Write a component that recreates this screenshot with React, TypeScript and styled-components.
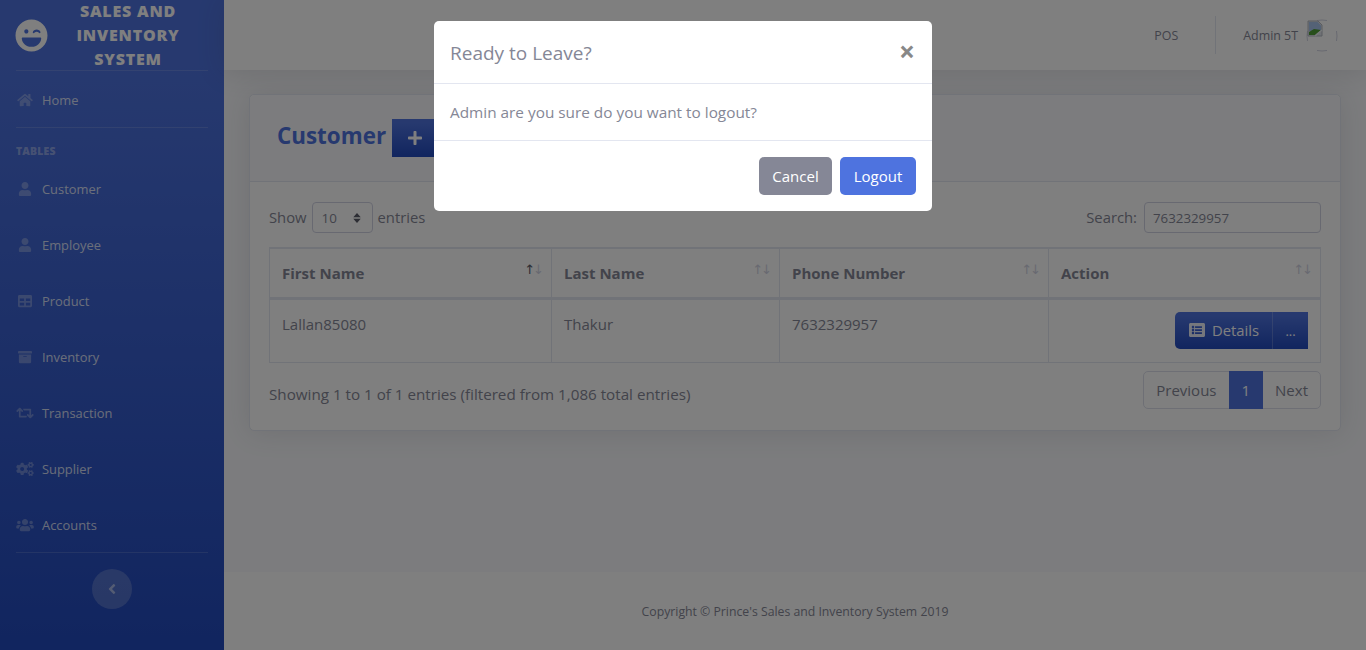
import React from "react";
import styled, { createGlobalStyle } from "styled-components";
import {
  FaAngleLeft,
  FaArchive,
  FaCogs,
  FaHome,
  FaLaughWink,
  FaListAlt,
  FaPlus,
  FaRetweet,
  FaTable,
  FaUser,
  FaUsers,
} from "react-icons/fa";

const FONT = `"Open Sans", "Noto Sans", sans-serif`;

const GlobalStyle = createGlobalStyle`
  html, body {
    margin: 0;
    height: 650px;
    overflow: hidden;
    background: #f8f9fc;
    font-family: ${FONT};
    color: #858796;
  }
  * { box-sizing: border-box; }
`;

const Wrapper = styled.div`
  display: flex;
  width: 1366px;
  height: 650px;
`;

const Sidebar = styled.aside`
  width: 224px;
  flex: none;
  display: flex;
  flex-direction: column;
  background: linear-gradient(180deg, #4e73df 10%, #224abe 100%);
`;

const Brand = styled.div`
  height: 70px;
  flex: none;
  display: flex;
  align-items: center;
  padding-left: 15px;
  color: #fff;
  font-size: 33px;
  svg { flex: none; }
`;

const BrandText = styled.div`
  width: 130px;
  margin-left: 15px;
  text-align: center;
  font-size: 16px;
  font-weight: 800;
  line-height: 24px;
  letter-spacing: 0.8px;
  text-transform: uppercase;
`;

const Divider = styled.hr<{ $top?: number }>`
  margin: ${(p) => p.$top ?? 0}px 16px 0;
  border: 0;
  border-top: 1px solid rgba(255, 255, 255, 0.15);
`;

const SideHeading = styled.div`
  margin-top: 18px;
  padding: 0 16px;
  height: 15px;
  font-size: 10.4px;
  line-height: 11px;
  font-weight: 800;
  letter-spacing: 0.2px;
  color: rgba(255, 255, 255, 0.4);
`;

const NavItem = styled.a<{ $first?: boolean }>`
  height: 56px;
  flex: none;
  display: flex;
  align-items: center;
  margin-top: ${(p) => (p.$first ? 1 : 0)}px;
  padding: 0 16px 1px;
  font-size: 12.9px;
  color: rgba(255, 255, 255, 0.8);
  svg {
    width: 18px;
    height: 14px;
    margin-right: 8px;
    color: rgba(255, 255, 255, 0.3);
  }
`;

const NavList = styled.nav`
  display: flex;
  flex-direction: column;
`;

const ToggleRow = styled.div`
  display: flex;
  justify-content: center;
  margin-top: 16px;
`;

const Toggle = styled.button`
  width: 40px;
  height: 40px;
  padding: 0;
  display: flex;
  align-items: center;
  justify-content: center;
  border: 0;
  border-radius: 50%;
  background: rgba(255, 255, 255, 0.2);
  color: rgba(255, 255, 255, 0.5);
  font-size: 16px;
`;

const Main = styled.div`
  flex: 1;
  min-width: 0;
  display: flex;
  flex-direction: column;
`;

const Topbar = styled.header`
  height: 70px;
  flex: none;
  display: flex;
  align-items: center;
  justify-content: flex-end;
  background: #fff;
  box-shadow: 0 2px 28px 0 rgba(58, 59, 69, 0.15);
  font-size: 12.4px;
  color: #858796;
`;

const TopDivider = styled.div`
  width: 1px;
  height: 38px;
  margin: 0 27px 0 37px;
  background: #e3e6f0;
`;

const Avatar = styled.svg`
  width: 32px;
  height: 33px;
  margin: 0 28px 0 8px;
  display: block;
`;

const Content = styled.main`
  padding: 24px 25px 0 25px;
`;

const Card = styled.section`
  height: 337px;
  background: #fff;
  border: 1px solid #e3e6f0;
  border-radius: 5px;
  box-shadow: 0 2px 28px 0 rgba(58, 59, 69, 0.12);
`;

const CardHeader = styled.div`
  height: 87px;
  display: flex;
  align-items: center;
  padding: 0 27px;
  background: #f8f9fc;
  border-bottom: 1px solid #e3e6f0;
  border-radius: 5px 5px 0 0;
`;

const Title = styled.h4`
  margin: 0 6px 6px 0;
  font-size: 22.4px;
  font-weight: 700;
  color: #4e73df;
`;

const AddButton = styled.button`
  width: 90px;
  height: 38px;
  padding: 0;
  border: 0;
  color: #fff;
  background: linear-gradient(180deg, #4e73df 10%, #224abe 100%);
  font-size: 16px;
  text-align: left;
  svg { margin-left: 15px; display: block; }
`;

const CardBody = styled.div`
  padding: 20px 19px;
  font-size: 15.2px;
`;

const Controls = styled.div`
  height: 31px;
  display: flex;
  align-items: center;
  justify-content: space-between;
`;

const ControlLabel = styled.div`
  display: flex;
  align-items: center;
  gap: 5px;
  margin-top: -2px;
  font-size: 14.8px;
`;

const SelectBox = styled.div`
  width: 61px;
  height: 31px;
  margin-top: 2px;
  padding-left: 9px;
  display: flex;
  align-items: center;
  border: 1px solid #d1d3e2;
  border-radius: 4px;
  background: #fff;
  font-size: 13.4px;
  svg { margin-left: 16px; }
`;

const SearchInput = styled.div`
  width: 177px;
  height: 31px;
  margin: 2px 0 0 2px;
  padding-left: 8px;
  display: flex;
  align-items: center;
  border: 1px solid #d1d3e2;
  border-radius: 4px;
  background: #fff;
  font-size: 13.3px;
`;

const Table = styled.table`
  width: 1051px;
  margin-top: 14px;
  border-collapse: collapse;
  table-layout: fixed;
  border: 1px solid #e3e6f0;
`;

const HeadCell = styled.th`
  height: 50px;
  padding: 0 12px;
  text-align: left;
  font-size: 15px;
  font-weight: 700;
  border: 1px solid #e3e6f0;
  border-top-width: 2px;
  border-bottom-width: 3px;
`;

const HeadInner = styled.div`
  display: flex;
  align-items: center;
  justify-content: space-between;
`;

const SortArrows = styled.span`
  margin: -6px -3px 0 0;
  font-family: "DejaVu Sans", sans-serif;
  font-size: 13px;
  font-weight: 400;
  letter-spacing: -2px;
  color: #d1d3e2;
`;

const SortUp = styled.span<{ $active?: boolean }>`
  color: ${(p) => (p.$active ? "#5a5c69" : "inherit")};
`;

const Cell = styled.td`
  height: 64px;
  padding: 14px 12px 0;
  vertical-align: top;
  font-size: 15px;
  border: 1px solid #e3e6f0;
`;

const ActionCell = styled(Cell)`
  padding-top: 12px;
`;

const SplitButton = styled.div`
  display: flex;
  justify-content: flex-end;
  color: #fff;
  font-size: 14.8px;
`;

const DetailsPart = styled.div`
  width: 97px;
  height: 37px;
  display: flex;
  align-items: center;
  gap: 7px;
  padding-left: 14px;
  border-radius: 5px 0 0 5px;
  background: linear-gradient(180deg, #4e73df 10%, #224abe 100%);
  svg { font-size: 16px; color: rgba(255, 255, 255, 0.9); }
`;

const MorePart = styled.div`
  width: 36px;
  height: 37px;
  padding-top: 10px;
  text-align: center;
  border-left: 1px solid rgba(255, 255, 255, 0.2);
  background: linear-gradient(180deg, #4e73df 10%, #224abe 100%);
  font-size: 13px;
`;

const Bottom = styled.div`
  display: flex;
  align-items: center;
  justify-content: space-between;
  margin-top: 8px;
`;

const Summary = styled.span`
  margin-top: 8px;
`;

const Pagination = styled.div`
  display: flex;
  height: 38px;
  border: 1px solid #dddfeb;
  border-radius: 5px;
  background: #fff;
  font-size: 15px;
`;

const PageLink = styled.span<{ $active?: boolean }>`
  display: flex;
  align-items: center;
  padding: 0 ${(p) => (p.$active ? 13 : 12)}px;
  margin: ${(p) => (p.$active ? "-1px 0" : "0")};
  background: ${(p) => (p.$active ? "#4e73df" : "transparent")};
  color: ${(p) => (p.$active ? "#fff" : "#858796")};
`;

const Footer = styled.footer`
  margin-top: auto;
  height: 78px;
  display: flex;
  align-items: center;
  justify-content: center;
  background: #fff;
  font-size: 12.25px;
  color: #858796;
`;

const Backdrop = styled.div`
  position: fixed;
  inset: 0;
  display: flex;
  justify-content: center;
  align-items: flex-start;
  padding-top: 21px;
  background: rgba(0, 0, 0, 0.5);
`;

const Modal = styled.div`
  width: 498px;
  height: 190px;
  background: #fff;
  border-radius: 5px;
`;

const ModalHeader = styled.div`
  height: 63px;
  display: flex;
  align-items: center;
  justify-content: space-between;
  padding: 2px 16px 0;
  border-bottom: 1px solid #e3e6f0;
`;

const ModalTitle = styled.h5`
  margin: 0;
  font-size: 19px;
  font-weight: 400;
  color: #858796;
`;

const CloseMark = styled.span`
  margin: -5px 1px 0 0;
  font-size: 28px;
  line-height: 1;
  font-weight: 700;
  color: #888;
`;

const ModalBody = styled.div`
  height: 57px;
  display: flex;
  align-items: center;
  padding: 0 16px;
  border-bottom: 1px solid #e3e6f0;
  font-size: 15.35px;
  color: #858796;
`;

const ModalFooter = styled.div`
  display: flex;
  justify-content: flex-end;
  gap: 8px;
  padding: 16px;
`;

const ModalButton = styled.button<{ $primary?: boolean }>`
  height: 38px;
  width: ${(p) => (p.$primary ? 76 : 73)}px;
  padding: 0;
  border: 0;
  border-radius: 5px;
  background: ${(p) => (p.$primary ? "#4e73df" : "#858796")};
  color: #fff;
  font-family: ${FONT};
  font-size: 15px;
`;

const NAV = [
  { label: "Customer", icon: <FaUser /> },
  { label: "Employee", icon: <FaUser /> },
  { label: "Product", icon: <FaTable /> },
  { label: "Inventory", icon: <FaArchive /> },
  { label: "Transaction", icon: <FaRetweet /> },
  { label: "Supplier", icon: <FaCogs /> },
  { label: "Accounts", icon: <FaUsers /> },
];

const COLUMNS = [
  { label: "First Name", width: 282, active: true },
  { label: "Last Name", width: 228 },
  { label: "Phone Number", width: 269 },
  { label: "Action", width: 272 },
];

// broken image placeholder plus the bits of the round border that still show
function BrokenAvatar() {
  return (
    <Avatar viewBox="0 0 32 33">
      <g fill="none" stroke="#d1d3e2">
        <path d="M11 1.500q5-1 10 0" />
        <path d="M11 31.500q5 1 10 0" />
        <path d="M1.500 12q-1 5 0 10" />
        <path d="M30.500 12q1 5 0 10" />
      </g>
      <path d="M2 2h10l4 4v11H2z" fill="#dfe3ea" stroke="#b4b9c2" />
      <path d="M3 3h8.500l3.500 3.500v5L3 12z" fill="#a9c4ec" />
      <path d="M3 16v-3l5-3 7 1-6 5z" fill="#4f9e36" />
      <path d="M9 17l7-6" stroke="#eef0f4" strokeWidth="1.500" />
    </Avatar>
  );
}

export default function App() {
  return (
    <>
      <GlobalStyle />
      <Wrapper>
        <Sidebar>
          <Brand>
            <FaLaughWink />
            <BrandText>Sales and Inventory System</BrandText>
          </Brand>
          <Divider />
          <NavList>
            <NavItem $first>
              <FaHome />
              Home
            </NavItem>
          </NavList>
          <Divider $top={-1} />
          <SideHeading>TABLES</SideHeading>
          <NavList>
            {NAV.map((item) => (
              <NavItem key={item.label}>
                {item.icon}
                {item.label}
              </NavItem>
            ))}
          </NavList>
          <Divider $top={-1} />
          <ToggleRow>
            <Toggle>
              <FaAngleLeft />
            </Toggle>
          </ToggleRow>
        </Sidebar>
        <Main>
          <Topbar>
            <span>POS</span>
            <TopDivider />
            <span>Admin 5T</span>
            <BrokenAvatar />
          </Topbar>
          <Content>
            <Card>
              <CardHeader>
                <Title>Customer</Title>
                <AddButton>
                  <FaPlus />
                </AddButton>
              </CardHeader>
              <CardBody>
                <Controls>
                  <ControlLabel>
                    Show
                    <SelectBox>
                      10
                      <svg width="8" height="10" viewBox="0 0 9 12">
                        <path d="M4.500 0L9 5H0zM0 7h9l-4.500 5z" fill="#5a5c69" />
                      </svg>
                    </SelectBox>
                    entries
                  </ControlLabel>
                  <ControlLabel>
                    Search:
                    <SearchInput>7632329957</SearchInput>
                  </ControlLabel>
                </Controls>
                <Table>
                  <colgroup>
                    {COLUMNS.map((col) => (
                      <col key={col.label} width={col.width} />
                    ))}
                  </colgroup>
                  <thead>
                    <tr>
                      {COLUMNS.map((col) => (
                        <HeadCell key={col.label}>
                          <HeadInner>
                            {col.label}
                            <SortArrows>
                              <SortUp $active={col.active}>↑</SortUp>↓
                            </SortArrows>
                          </HeadInner>
                        </HeadCell>
                      ))}
                    </tr>
                  </thead>
                  <tbody>
                    <tr>
                      <Cell>Lallan85080</Cell>
                      <Cell>Thakur</Cell>
                      <Cell>7632329957</Cell>
                      <ActionCell>
                        <SplitButton>
                          <DetailsPart>
                            <FaListAlt />
                            Details
                          </DetailsPart>
                          <MorePart>...</MorePart>
                        </SplitButton>
                      </ActionCell>
                    </tr>
                  </tbody>
                </Table>
                <Bottom>
                  <Summary>Showing 1 to 1 of 1 entries (filtered from 1,086 total entries)</Summary>
                  <Pagination>
                    <PageLink>Previous</PageLink>
                    <PageLink $active>1</PageLink>
                    <PageLink>Next</PageLink>
                  </Pagination>
                </Bottom>
              </CardBody>
            </Card>
          </Content>
          <Footer>Copyright © Prince's Sales and Inventory System 2019</Footer>
        </Main>
      </Wrapper>
      <Backdrop>
        <Modal>
          <ModalHeader>
            <ModalTitle>Ready to Leave?</ModalTitle>
            <CloseMark>×</CloseMark>
          </ModalHeader>
          <ModalBody>Admin are you sure do you want to logout?</ModalBody>
          <ModalFooter>
            <ModalButton>Cancel</ModalButton>
            <ModalButton $primary>Logout</ModalButton>
          </ModalFooter>
        </Modal>
      </Backdrop>
    </>
  );
}
